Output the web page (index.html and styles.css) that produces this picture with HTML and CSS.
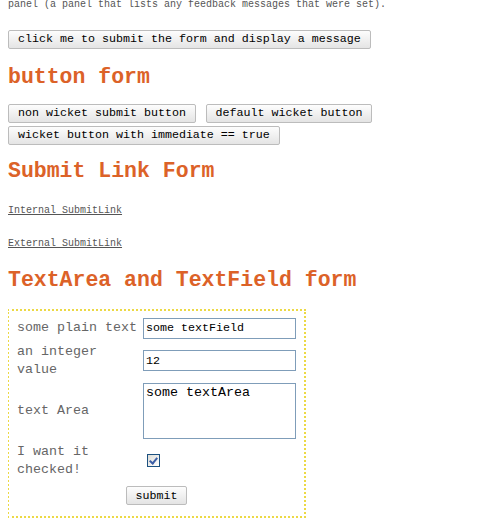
FILE: index.html
```html
<!DOCTYPE html>
<html lang="en">
<head>
  <meta charset="UTF-8">
  <meta name="viewport" content="width=device-width, initial-scale=1.0">
  <title>Forms</title>
  <link rel="stylesheet" href="styles.css">
</head>
<body>

  <p class="intro">panel (a panel that lists any feedback messages that were set).</p>

  <form class="message-form">
    <button type="button" class="btn">click me to submit the form and display a message</button>
  </form>

  <h2 class="section-title">button form</h2>
  <form class="button-form">
    <button type="button" class="btn">non wicket submit button</button>
    <button type="button" class="btn">default wicket button</button>
    <button type="button" class="btn">wicket button with immediate == true</button>
  </form>

  <h2 class="section-title">Submit Link Form</h2>
  <form class="link-form">
    <p><a href="#">Internal SubmitLink</a></p>
    <p><a href="#">External SubmitLink</a></p>
  </form>

  <h2 class="section-title">TextArea and TextField form</h2>
  <form class="fields-form">
    <table class="fields">
      <tr>
        <td class="label">some plain text</td>
        <td><input type="text" class="field" value="some textField"></td>
      </tr>
      <tr>
        <td class="label">an integer value</td>
        <td><input type="text" class="field" value="12"></td>
      </tr>
      <tr>
        <td class="label">text Area</td>
        <td><textarea class="field area">some textArea</textarea></td>
      </tr>
      <tr>
        <td class="label">I want it checked!</td>
        <td><input type="checkbox" class="check" checked></td>
      </tr>
    </table>
    <div class="submit-row">
      <button type="button" class="btn">submit</button>
    </div>
  </form>

</body>
</html>
```

FILE: styles.css
```css
body {
  font-family: "Liberation Mono", monospace;
  color: #555;
  background-color: #fff;
  margin: 0 8px;
}

.intro {
  font-size: 10px;
  line-height: 12px;
  margin: -1px 0 0;
}

.btn {
  font-family: "Liberation Mono", monospace;
  font-size: 11.67px;
  color: #000;
  height: 19px;
  padding: 0 9px;
  margin: 0;
  background: linear-gradient(#fdfdfd, #e4e4e4);
  border: 1px solid #bcbcbc;
  border-radius: 2px;
  cursor: pointer;
}

.message-form {
  margin-top: 18px;
}

.section-title {
  font-size: 21.5px;
  line-height: 26px;
  font-weight: bold;
  color: #dc6228;
  margin: 15px 0 0;
}

.button-form {
  margin: 13px 0 -4px;
  width: 380px;
  line-height: 22px;
}

.button-form .btn {
  vertical-align: middle;
}

.link-form {
  margin-top: 21px;
  padding-bottom: 2px;
}

.link-form p {
  margin: 0;
  font-size: 10px;
  line-height: 12px;
}

.link-form p + p {
  margin-top: 21px;
}

.link-form a {
  color: #555;
}

.fields-form {
  box-sizing: border-box;
  width: 299px;
  margin: 16px 0 0 -1px;
  padding: 5px 6px 11px;
  border: 2px dotted #ecd945;
}

.fields {
  border-collapse: collapse;
  border-spacing: 0;
}

.fields td {
  padding: 2px;
  vertical-align: middle;
}

.fields .label {
  width: 123px;
  font-size: 13.33px;
  line-height: 18px;
  color: #666;
}

.field {
  box-sizing: border-box;
  width: 153px;
  height: 21px;
  margin: 0;
  padding: 1px 2px;
  font-family: "Liberation Mono", monospace;
  font-size: 11.67px;
  color: #000;
  border: 1px solid #7f9db9;
}

.area {
  display: block;
  height: 56px;
  font-size: 13.33px;
  resize: none;
}

.check {
  appearance: none;
  position: relative;
  width: 13px;
  height: 13px;
  margin: 3px 0 3px 4px;
  border: 1px solid #1c5180;
  background: linear-gradient(135deg, #dcdcd7, #fff);
  vertical-align: middle;
}

.check:checked::after {
  content: "";
  position: absolute;
  left: 3px;
  top: 1px;
  width: 3px;
  height: 6px;
  border: solid #3c5ea6;
  border-width: 0 2px 2px 0;
  transform: rotate(40deg);
}

.submit-row {
  text-align: center;
  margin-top: 5px;
}
```
